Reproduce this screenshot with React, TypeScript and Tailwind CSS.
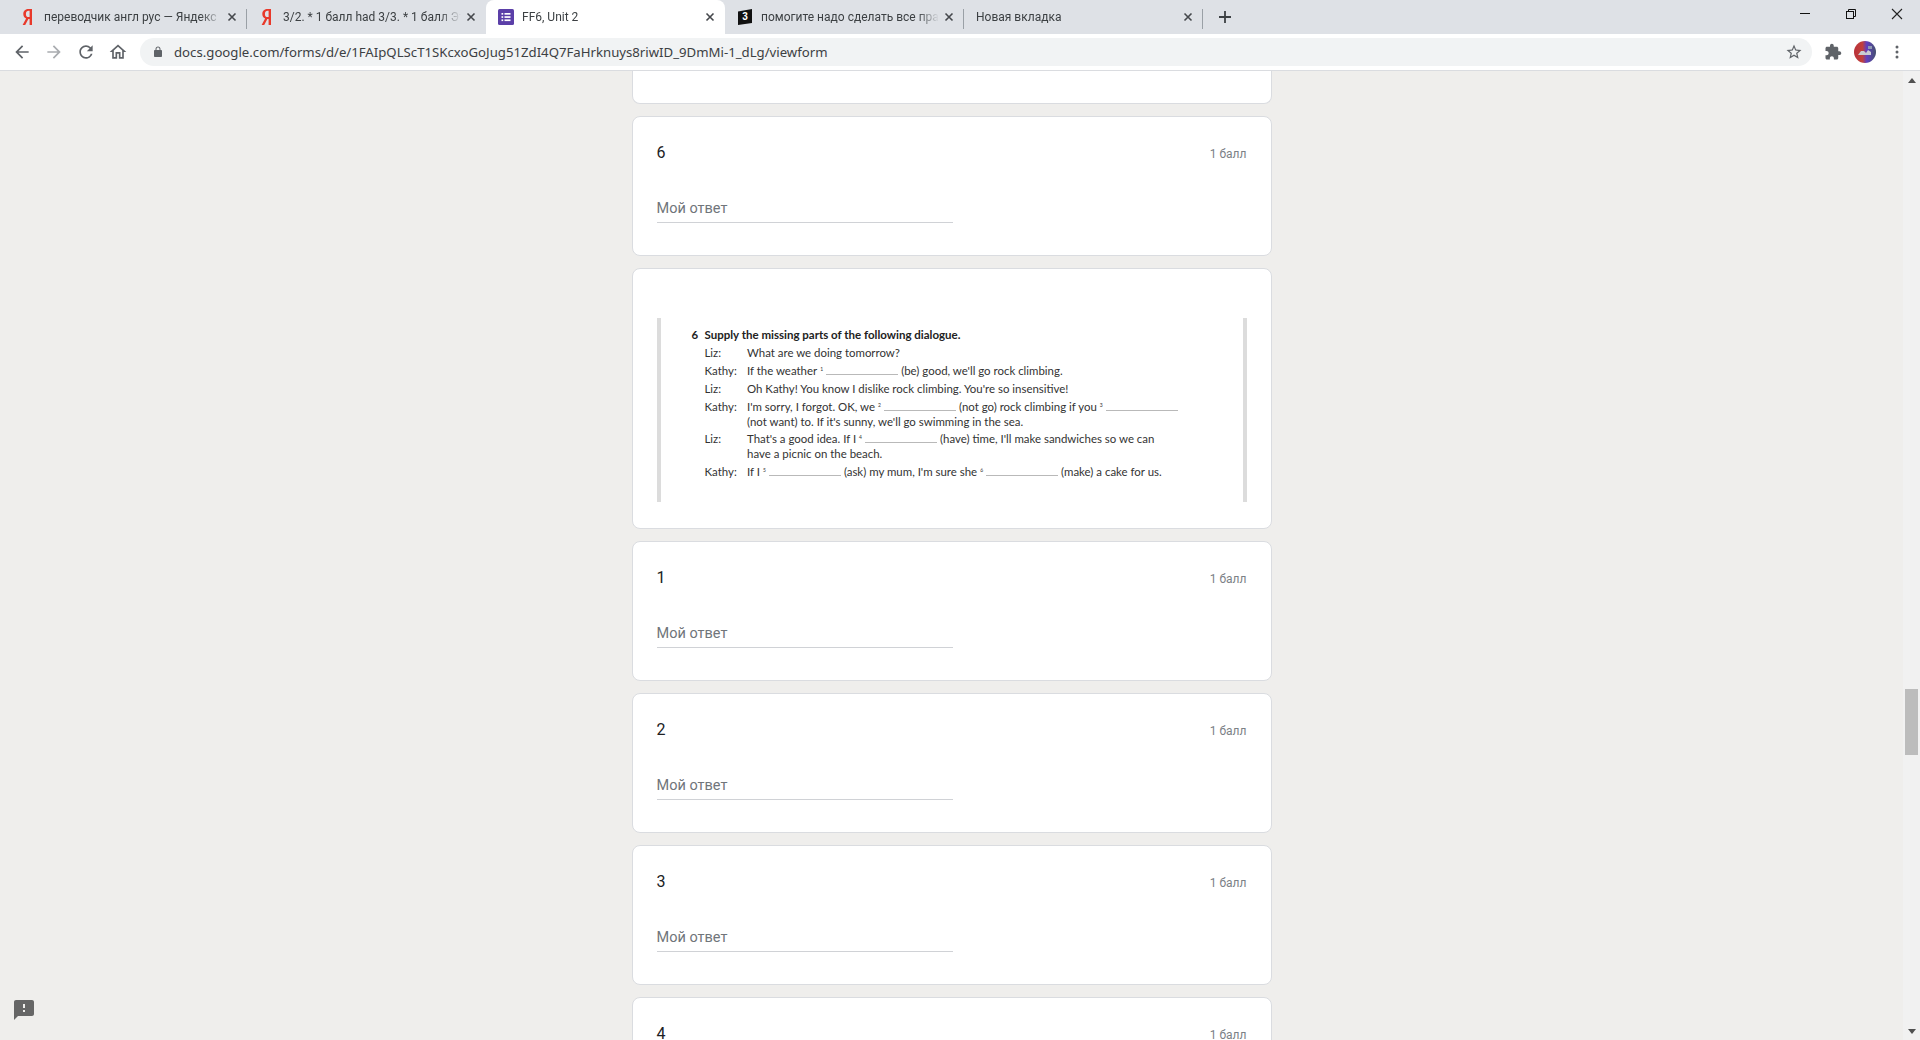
import React from "react";

const Sans = '"Noto Sans", sans-serif';

function X({ className = "" }: { className?: string }) {
  return (
    <svg width="10" height="10" viewBox="0 0 10 10" className={className}>
      <path d="M1.5 1.5l7 7M8.5 1.5l-7 7" stroke="#45484c" strokeWidth="1.6" fill="none" />
    </svg>
  );
}

function Ya() {
  return (
    <span className="w-4 h-4 flex items-center justify-center">
      <svg width="12" height="18" viewBox="0 0 12 18">
        <path d="M6.8 1C3.6 1 1.3 2.8 1.3 5.9c0 2.2 1 3.5 2.8 4.6L.6 17h2.6l3.2-6h1.2v6H10V1H6.8zm.8 8.100h-.9c-1.700 0-2.800-1-2.800-3.200 0-2.300 1.200-3.100 2.800-3.100h.9v6.300z" fill="#e8392b" />
      </svg>
    </span>
  );
}

function Forms() {
  return (
    <svg width="16" height="16" viewBox="0 0 16 16">
      <rect width="16" height="16" rx="1.5" fill="#5b3fa8" />
      <rect x="3.500" y="4" width="1.700" height="1.700" fill="#fff" />
      <rect x="3.500" y="7.200" width="1.700" height="1.700" fill="#fff" />
      <rect x="3.500" y="10.400" width="1.700" height="1.700" fill="#fff" />
      <rect x="6.500" y="4" width="6" height="1.700" fill="#fff" />
      <rect x="6.500" y="7.200" width="6" height="1.700" fill="#fff" />
      <rect x="6.500" y="10.400" width="6" height="1.700" fill="#fff" />
    </svg>
  );
}

function Znanija() {
  return (
    <span className="relative w-4 h-4 block">
      <svg width="16" height="16" viewBox="0 0 16 16" className="block">
        <path d="M1 2.500L15 0v14L1 16z" fill="#111" />
      </svg>
      <span className="absolute inset-0 flex items-center justify-center text-[10px] font-bold text-white leading-none" style={{ fontFamily: '"Liberation Sans", sans-serif' }}>
        3
      </span>
    </span>
  );
}

function Tab({ icon, title, active, sep }: { icon?: React.ReactNode; title: string; active?: boolean; sep?: boolean }) {
  return (
    <div className={"relative w-[239px] h-[34px] flex items-center pl-3 pr-[10px] " + (active ? "bg-white rounded-t-lg" : "")}>
      {icon ? <span className="w-4 h-4 mr-2 shrink-0">{icon}</span> : null}
      <span className="flex-1 overflow-hidden whitespace-nowrap text-[12px] text-[#3c4043] [mask-image:linear-gradient(to_right,#000_88%,transparent)]" style={{ fontFamily: "Roboto, sans-serif" }}>
        {title}
      </span>
      <X className="ml-[5px] shrink-0" />
      {sep ? <span className="absolute right-0 top-[9px] w-px h-[20px] bg-[#9aa0a6]" /> : null}
    </div>
  );
}

function TabStrip() {
  return (
    <div className="h-[34px] bg-[#dee1e6] flex pl-2 relative shrink-0" style={{ fontFamily: Sans }}>
      <Tab icon={<Ya />} title="переводчик англ рус — Яндекс" sep />
      <Tab icon={<Ya />} title="3/2. * 1 балл had 3/3. * 1 балл Эт" />
      <Tab icon={<Forms />} title="FF6, Unit 2" active />
      <Tab icon={<Znanija />} title="помогите надо сделать все прав" sep />
      <Tab title="Новая вкладка" sep />
      <div className="ml-[15px] h-[34px] flex items-center">
        <svg width="14" height="14" viewBox="0 0 14 14">
          <path d="M7 1v12M1 7h12" stroke="#3c4043" strokeWidth="1.800" />
        </svg>
      </div>
      <div className="flex-1" />
      <div className="flex items-start text-[#202124]">
        <div className="w-[46px] h-[28px] flex items-center justify-center">
          <svg width="10" height="2" viewBox="0 0 10 2"><rect width="10" height="1" fill="#111" /></svg>
        </div>
        <div className="w-[46px] h-[28px] flex items-center justify-center">
          <svg width="10" height="10" viewBox="0 0 10 10" fill="none" stroke="#111">
            <rect x=".5" y="2.500" width="7" height="7" />
            <path d="M2.500 2.500V.5h7v7h-2" />
          </svg>
        </div>
        <div className="w-[46px] h-[28px] flex items-center justify-center">
          <svg width="12" height="12" viewBox="0 0 12 12" fill="none" stroke="#222" strokeWidth="1.100">
            <path d="M1 1l10 10M11 1L1 11" />
          </svg>
        </div>
      </div>
    </div>
  );
}

function Ic({ d, fill = "#5f6368", size = 24 }: { d: string; fill?: string; size?: number }) {
  return (
    <svg width={size} height={size} viewBox="0 0 24 24" className="block shrink-0">
      <path d={d} fill={fill} />
    </svg>
  );
}

function Toolbar() {
  return (
    <div className="h-[37px] bg-white border-b border-[#dadce0] flex items-start shrink-0" style={{ fontFamily: Sans }}>
      <div className="flex items-center h-[36px] pl-[12px] gap-[12px]">
        <Ic size={20} d="M20 11H7.830l5.590-5.590L12 4l-8 8 8 8 1.410-1.410L7.830 13H20v-2z" />
        <Ic size={20} fill="#a9acb0" d="M4 11h12.170l-5.590-5.590L12 4l8 8-8 8-1.410-1.410L16.170 13H4v-2z" />
        <Ic size={20} d="M17.650 6.350A7.958 7.958 0 0 0 12 4c-4.420 0-7.990 3.580-7.990 8s3.570 8 7.990 8c3.730 0 6.840-2.550 7.730-6h-2.080A5.990 5.990 0 0 1 12 18c-3.310 0-6-2.690-6-6s2.690-6 6-6c1.660 0 3.140.690 4.220 1.780L13 11h7V4l-2.350 2.350z" />
        <Ic size={20} d="M12 5.690l5 4.500V18h-2v-6H9v6H7v-7.810l5-4.500M12 3L2 12h3v8h6v-6h2v6h6v-8h3L12 3z" />
      </div>
      <div className="ml-[12px] mt-[4px] w-[1672px] h-[28px] rounded-full bg-[#f1f3f4] flex items-center pl-[12px] pr-[9px]">
        <svg width="12" height="12" viewBox="0 0 24 24" className="shrink-0">
          <path fill="#5f6368" d="M18 8h-1V6c0-2.760-2.240-5-5-5S7 3.240 7 6v2H6c-1.100 0-2 .9-2 2v10c0 1.100.9 2 2 2h12c1.100 0 2-.9 2-2V10c0-1.100-.9-2-2-2zM9 8V6c0-1.660 1.340-3 3-3s3 1.340 3 3v2H9z" />
        </svg>
        <span className="ml-[10px] flex-1 whitespace-nowrap text-[13.2px] text-[#3c4043] pt-[1px]">
          docs.google.com/forms/d/e/1FAIpQLScT1SKcxoGoJug51ZdI4Q7FaHrknuys8riwID_9DmMi-1_dLg/viewform
        </span>
        <Ic size={18} d="M22 9.240l-7.190-.62L12 2 9.190 8.630 2 9.240l5.460 4.730L5.820 21 12 17.270 18.180 21l-1.630-7.030L22 9.240zM12 15.400l-3.760 2.270 1-4.280-3.320-2.880 4.380-.38L12 6.100l1.710 4.040 4.380.38-3.320 2.880 1 4.280L12 15.400z" />
      </div>
      <div className="flex items-center h-[36px] ml-[12px]">
        <Ic size={18} d="M20.500 11H19V7c0-1.100-.9-2-2-2h-4V3.500C13 2.120 11.880 1 10.500 1S8 2.120 8 3.500V5H4c-1.100 0-1.990.9-1.990 2v3.800H3.500c1.490 0 2.700 1.210 2.700 2.700s-1.210 2.700-2.700 2.700H2V20c0 1.100.9 2 2 2h3.800v-1.500c0-1.490 1.210-2.700 2.700-2.700 1.490 0 2.700 1.210 2.700 2.700V22H17c1.100 0 2-.9 2-2v-4h1.500c1.380 0 2.500-1.120 2.500-2.500S21.880 11 20.500 11z" />
        <svg width="22" height="22" viewBox="0 0 22 22" className="ml-[12px] shrink-0">
          <defs>
            <linearGradient id="avg" x1="0" x2="1" y1="0" y2="0">
              <stop offset="0" stopColor="#b8323a" />
              <stop offset=".38" stopColor="#c2403a" />
              <stop offset=".58" stopColor="#5f3fc0" />
              <stop offset="1" stopColor="#45506e" />
            </linearGradient>
            <clipPath id="av"><circle cx="11" cy="11" r="11" /></clipPath>
          </defs>
          <g clipPath="url(#av)">
            <rect width="22" height="22" fill="url(#avg)" />
            <path d="M4 14l3-4h3l2 2 2-3 3 2v3z" fill="#c9ccd2" />
            <path d="M14 5h4v3h-4z" fill="#8f9ab2" />
          </g>
        </svg>
        <svg width="4" height="16" viewBox="0 0 4 16" className="ml-[19px] shrink-0">
          <circle cx="2" cy="3" r="1.500" fill="#5f6368" />
          <circle cx="2" cy="8" r="1.500" fill="#5f6368" />
          <circle cx="2" cy="13" r="1.500" fill="#5f6368" />
        </svg>
      </div>
    </div>
  );
}

function Question({ n }: { n: string }) {
  return (
    <div className="bg-white border border-[#dadce0] rounded-lg h-[140px] pt-[24px] px-[24px] shrink-0" style={{ fontFamily: "Roboto, sans-serif" }}>
      <div className="flex justify-between items-center h-6">
        <span className="text-[16px] text-[#202124]">{n}</span>
        <span className="text-[12px] text-[#7c8186] pt-[2px]">1 балл</span>
      </div>
      <div className="mt-[30px] w-[296px] h-[28px] pt-[2px] border-b border-[#d0d2d6] text-[14.500px] leading-[24px] text-[#70757a]">Мой ответ</div>
    </div>
  );
}

function Blank({ w = 72 }: { w?: number }) {
  return <span className="inline-block h-[1px] bg-[#b9b9b9] mx-[3px] align-baseline" style={{ width: w }} />;
}

function Sup({ n }: { n: string }) {
  return <span className="relative -top-[4px] text-[5px] leading-[0] ml-[3px]">{n}</span>;
}

function Line({ who, h, children }: { who?: string; h: string; children: React.ReactNode }) {
  return (
    <div className={"flex whitespace-nowrap " + h}>
      <span className="w-[42.500px] shrink-0">{who}</span>
      <span className="h-[18px]">{children}</span>
    </div>
  );
}

function Exercise() {
  return (
    <div className="bg-white border border-[#dadce0] rounded-lg h-[261px] shrink-0 pt-[49px] px-[24px]">
      <div className="h-[184px] border-x-[4px] border-[#dcdcdc] pl-[31px] pt-[8px] text-[11.450px] text-[#333]" style={{ fontFamily: 'Lato, sans-serif' }}>
        <div className="flex h-[18px] leading-[18px] font-bold text-[#222]">
          <span className="w-[13px]">6</span>
          <span className="text-[11.500px]">Supply the missing parts of the following dialogue.</span>
        </div>
        <div className="pl-[13px] leading-[18px]">
          <Line who="Liz:" h="h-[18px]">What are we doing tomorrow?</Line>
          <Line who="Kathy:" h="h-[18px]">If the weather<Sup n="1" /><Blank />(be) good, we'll go rock climbing.</Line>
          <Line who="Liz:" h="h-[18px]">Oh Kathy! You know I dislike rock climbing. You're so insensitive!</Line>
          <Line who="Kathy:" h="h-[15px]">I'm sorry, I forgot. OK, we<Sup n="2" /><Blank />(not go) rock climbing if you<Sup n="3" /><Blank /></Line>
          <Line h="h-[17px]">(not want) to. If it's sunny, we'll go swimming in the sea.</Line>
          <Line who="Liz:" h="h-[15px]">That's a good idea. If I<Sup n="4" /><Blank />(have) time, I'll make sandwiches so we can</Line>
          <Line h="h-[18px]">have a picnic on the beach.</Line>
          <Line who="Kathy:" h="h-[18px]">If I<Sup n="5" /><Blank />(ask) my mum, I'm sure she<Sup n="6" /><Blank />(make) a cake for us.</Line>
        </div>
      </div>
    </div>
  );
}

function Scrollbar() {
  return (
    <div className="w-[17px] bg-[#f1f1f1] flex flex-col items-center shrink-0">
      <div className="h-[18px] flex items-center justify-center">
        <svg width="8" height="5" viewBox="0 0 8 5"><path d="M4 0l4 5H0z" fill="#505050" /></svg>
      </div>
      <div className="mt-[600px] w-[13px] h-[66px] bg-[#bcbcbc]" />
      <div className="flex-1" />
      <div className="h-[18px] flex items-center justify-center">
        <svg width="8" height="5" viewBox="0 0 8 5"><path d="M4 5l4-5H0z" fill="#505050" /></svg>
      </div>
    </div>
  );
}

export default function App() {
  return (
    <div className="w-screen h-screen overflow-hidden flex flex-col bg-[#efeeec]">
      <TabStrip />
      <Toolbar />
      <div className="flex-1 flex min-h-0 relative">
        <main className="flex-1 overflow-hidden flex justify-center">
          <div className="w-[640px] flex flex-col gap-[12px]">
            <div className="h-[33px] bg-white border border-t-0 border-[#dadce0] rounded-b-lg shrink-0" />
            <Question n="6" />
            <Exercise />
            <Question n="1" />
            <Question n="2" />
            <Question n="3" />
            <Question n="4" />
          </div>
        </main>
        <Scrollbar />
        <div className="absolute left-[12px] bottom-[18px]">
          <Ic size={24} fill="#666" d="M20 2H4c-1.100 0-1.990.9-1.990 2L2 22l4-4h14c1.100 0 2-.9 2-2V4c0-1.100-.9-2-2-2zm-7 12h-2v-2h2v2zm0-4h-2V6h2v4z" />
        </div>
      </div>
    </div>
  );
}
